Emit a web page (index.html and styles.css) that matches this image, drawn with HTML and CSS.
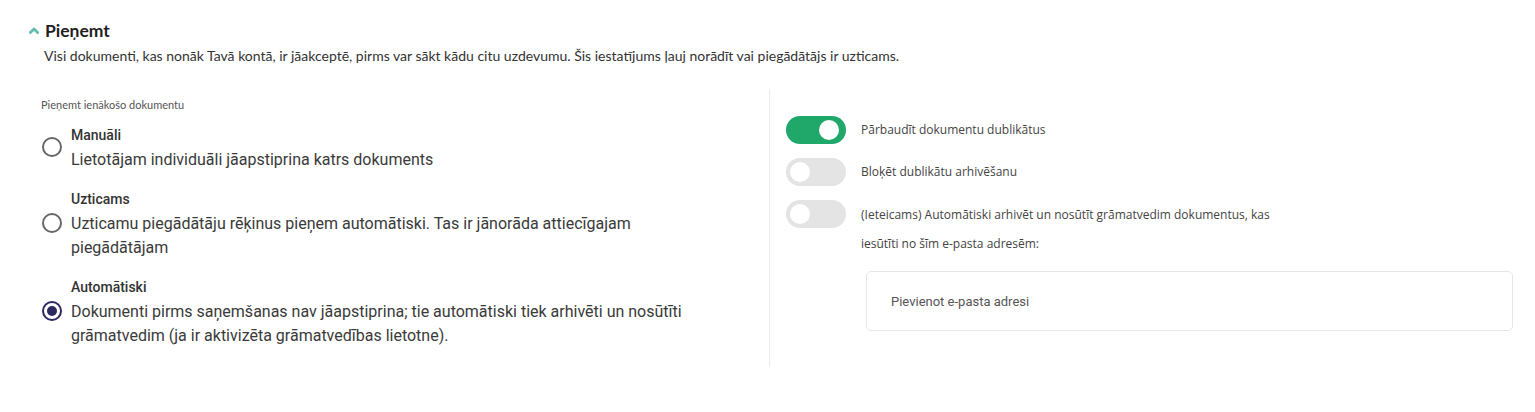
FILE: index.html
```html
<!DOCTYPE html>
<html lang="lv">
<head>
<meta charset="utf-8">
<link rel="stylesheet" href="styles.css">
</head>
<body>
<section class="panel">
  <header class="panel-head">
    <svg class="chevron" width="10" height="7" viewBox="0 0 10 7"><path d="M1.4 5.6 L5 2 L8.6 5.6" fill="none" stroke="#63bcb0" stroke-width="2.8" stroke-linecap="round" stroke-linejoin="round"/></svg>
    <h2 class="title">Pieņemt</h2>
  </header>
  <p class="intro">Visi dokumenti, kas nonāk Tavā kontā, ir jāakceptē, pirms var sākt kādu citu uzdevumu. Šis iestatījums ļauj norādīt vai piegādātājs ir uzticams.</p>

  <div class="columns">
    <div class="col-left">
      <div class="group-label">Pieņemt ienākošo dokumentu</div>
      <div class="options">
        <label class="option">
          <span class="radio"></span>
          <span class="option-text">
            <span class="option-title">Manuāli</span>
            <span class="option-desc">Lietotājam individuāli jāapstiprina katrs dokuments</span>
          </span>
        </label>
        <label class="option">
          <span class="radio"></span>
          <span class="option-text">
            <span class="option-title">Uzticams</span>
            <span class="option-desc">Uzticamu piegādātāju rēķinus pieņem automātiski. Tas ir jānorāda attiecīgajam piegādātājam</span>
          </span>
        </label>
        <label class="option">
          <span class="radio checked"></span>
          <span class="option-text">
            <span class="option-title">Automātiski</span>
            <span class="option-desc">Dokumenti pirms saņemšanas nav jāapstiprina; tie automātiski tiek arhivēti un nosūtīti grāmatvedim (ja ir aktivizēta grāmatvedības lietotne).</span>
          </span>
        </label>
      </div>
    </div>

    <div class="col-right">
      <div class="toggle-row">
        <span class="toggle on"><span class="knob"></span></span>
        <span class="toggle-label">Pārbaudīt dokumentu dublikātus</span>
      </div>
      <div class="toggle-row">
        <span class="toggle"><span class="knob"></span></span>
        <span class="toggle-label">Bloķēt dublikātu arhivēšanu</span>
      </div>
      <div class="toggle-row">
        <span class="toggle"><span class="knob"></span></span>
        <span class="toggle-label wrap">(Ieteicams) Automātiski arhivēt un nosūtīt grāmatvedim dokumentus, kas iesūtīti no šīm e-pasta adresēm:</span>
      </div>
      <div class="email-box">
        <span class="placeholder">Pievienot e-pasta adresi</span>
      </div>
    </div>
  </div>
</section>
</body>
</html>
```

FILE: styles.css
```css
* { box-sizing: border-box; }

body {
  margin: 0;
  background: #fff;
  font-family: "Lato", "Noto Sans", sans-serif;
  color: #333;
}

.panel {
  padding: 19px 22px 0 0;
}

.panel-head {
  display: flex;
  align-items: center;
  padding-left: 29px;
  gap: 6px;
  height: 24px;
}

.chevron { display: block; margin-top: -2px; }

.title {
  margin: 0;
  font-family: "Lato", sans-serif;
  font-weight: 700;
  font-size: 17.5px;
  line-height: 24px;
  color: #1f1f1f;
}

.intro {
  margin: 3px 0 0 44px;
  font-family: "Lato", sans-serif;
  font-size: 14px;
  line-height: 20px;
  color: #333;
}

.columns {
  display: flex;
  margin-top: 23px;
}

.col-left {
  width: 770px;
  padding: 9px 60px 19px 41px;
  border-right: 1px solid #ececec;
}

.group-label {
  font-family: "Lato", sans-serif;
  font-size: 11px;
  line-height: 14px;
  color: #555;
}

.options {
  display: flex;
  flex-direction: column;
  gap: 18px;
  margin-top: 14px;
}

.option {
  display: flex;
  align-items: center;
  gap: 9px;
  cursor: pointer;
}

.radio {
  flex: none;
  width: 20px;
  height: 20px;
  margin-left: 1px;
  margin-top: -4px;
  border: 2px solid #676767;
  border-radius: 50%;
  display: flex;
  align-items: center;
  justify-content: center;
}

.radio.checked {
  border-color: #2c2860;
}

.radio.checked::after {
  content: "";
  width: 10px;
  height: 10px;
  border-radius: 50%;
  background: #2c2860;
}

.option-text {
  display: flex;
  flex-direction: column;
  font-family: "Roboto", sans-serif;
}

.option-title {
  font-size: 14px;
  font-weight: 500;
  line-height: 18px;
  color: #333;
  margin-bottom: 4px;
}

.option-desc {
  font-size: 16px;
  line-height: 24px;
  color: #3a3a3a;
}

.col-right {
  flex: 1;
  padding: 27px 0 0 16px;
  display: flex;
  flex-direction: column;
  gap: 14px;
}

.toggle-row {
  display: flex;
  align-items: flex-start;
  gap: 15px;
}

.toggle {
  flex: none;
  width: 60px;
  height: 28px;
  border-radius: 14px;
  background: #e4e4e4;
  display: flex;
  align-items: center;
  padding: 0 4px;
}

.toggle.on {
  background: #20a86a;
  justify-content: flex-end;
  padding: 0 7px;
}

.knob {
  width: 20px;
  height: 20px;
  border-radius: 50%;
  background: #fff;
}

.toggle-label {
  font-family: "Open Sans", sans-serif;
  font-size: 12px;
  line-height: 28px;
  color: #444;
}

.toggle-label.wrap {
  max-width: 420px;
  line-height: 29px;
}

.email-box {
  margin: -1px 0 0 80px;
  height: 60px;
  border: 1px solid #e6e6e6;
  border-radius: 5px;
  display: flex;
  align-items: center;
  padding-left: 24px;
}

.placeholder {
  font-family: "Roboto", sans-serif;
  font-size: 13px;
  color: #555;
}
```
